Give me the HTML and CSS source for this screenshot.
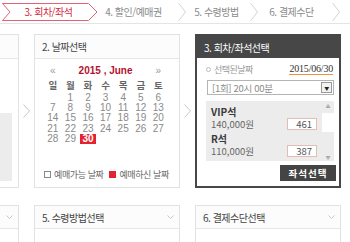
FILE: index.html
```html
<!DOCTYPE html>
<html lang="ko">
<head>
    <meta charset="UTF-8">
    <meta name="viewport" content="width=device-width, initial-scale=1.0">
    <title>예매 - 회차/좌석</title>
    <link rel="stylesheet" href="styles.css">
</head>
<body>
<div class="page">
    <!-- 단계 표시 -->
    <div class="steps">
        <svg class="step-lines" width="350" height="23" viewBox="0 0 350 23">
            <polygon points="2.5,3.5 88.5,3.5 97,12 88.5,20.5 2.5,20.5 10,12" fill="none" stroke="#e2627a" stroke-width="1"/>
            <polyline points="178.5,3 185.5,12 178.5,21" fill="none" stroke="#d4d4d4"/>
            <polyline points="250.5,3 257.5,12 250.5,21" fill="none" stroke="#d4d4d4"/>
            <polyline points="332.5,3 339.5,12 332.5,21" fill="none" stroke="#d4d4d4"/>
        </svg>
        <div class="step-labels">
            <span class="on" style="width:97px">3. 회차/좌석</span>
            <span style="width:73px">4. 할인/예매권</span>
            <span style="width:93px">5. 수령방법</span>
            <span style="width:57px">6. 결제수단</span>
        </div>
    </div>

    <div class="board">
        <!-- 1. 공연선택 (가려짐) -->
        <div class="card">
            <div class="card-head">1. 공연선택</div>
            <div class="card-body">
                <div class="show-list"></div>
            </div>
        </div>
        <div class="arrow"><svg width="7" height="14" viewBox="0 0 7 14"><polyline points="0.5,0.5 6.5,7 0.5,13.5" fill="none" stroke="#c8c8c8"/></svg></div>

        <!-- 2. 날짜선택 -->
        <div class="card">
            <div class="card-head">2. 날짜선택</div>
            <div class="card-body">
                <div class="cal">
                    <span class="cal-nav">«</span>
                    <span class="cal-title">2015 , June</span>
                    <span class="cal-nav">»</span>
                    <span class="wd">일</span><span class="wd">월</span><span class="wd">화</span><span class="wd">수</span><span class="wd">목</span><span class="wd">금</span><span class="wd">토</span>
                    <span></span><span>1</span><span>2</span><span>3</span><span>4</span><span>5</span><span>6</span>
                    <span>7</span><span>8</span><span>9</span><span>10</span><span>11</span><span>12</span><span>13</span>
                    <span>14</span><span>15</span><span>16</span><span>17</span><span>18</span><span>19</span><span>20</span>
                    <span>21</span><span>22</span><span>23</span><span>24</span><span>25</span><span>26</span><span>27</span>
                    <span>28</span><span>29</span><span><b class="picked">30</b></span>
                </div>
                <div class="legend">
                    <span class="mark mark-open"></span>예매가능 날짜
                    <span class="mark mark-booked"></span>예매하신 날짜
                </div>
            </div>
        </div>
        <div class="arrow"><svg width="7" height="14" viewBox="0 0 7 14"><polyline points="0.5,0.5 6.5,7 0.5,13.5" fill="none" stroke="#c8c8c8"/></svg></div>

        <!-- 3. 회차/좌석선택 -->
        <div class="card on">
            <div class="card-head">3. 회차/좌석선택</div>
            <div class="seat-body">
                <div class="date-row">
                    <span class="date-label">선택된날짜</span>
                    <span class="date-value">2015/06/30</span>
                </div>
                <div class="select">
                    <span>[1회] 20시 00분</span>
                    <span class="select-btn">▼</span>
                </div>
                <div class="seat-list">
                    <div class="seat-items">
                        <div class="seat">
                            <b>VIP석</b>
                            <div class="seat-price"><span>140,000원</span><span class="seat-count">461</span></div>
                        </div>
                        <div class="seat">
                            <b>R석</b>
                            <div class="seat-price"><span>110,000원</span><span class="seat-count">387</span></div>
                        </div>
                    </div>
                    <div class="scroll">
                        <span class="scroll-up">▲</span>
                        <span class="scroll-thumb"></span>
                        <span class="scroll-down">▼</span>
                    </div>
                </div>
                <button class="seat-btn">좌석선택</button>
            </div>
        </div>

        <!-- 아래 줄 -->
        <div class="card">
            <div class="card-head low">4. 할인/예매권선택<svg class="fold" width="7" height="4" viewBox="0 0 7 4"><polyline points="0.5,0.5 3.5,3.5 6.5,0.5" fill="none" stroke="#c8c8c8"/></svg></div>
        </div>
        <div></div>
        <div class="card">
            <div class="card-head low">5. 수령방법선택<svg class="fold" width="7" height="4" viewBox="0 0 7 4"><polyline points="0.5,0.5 3.5,3.5 6.5,0.5" fill="none" stroke="#c8c8c8"/></svg></div>
        </div>
        <div></div>
        <div class="card">
            <div class="card-head low">6. 결제수단선택<svg class="fold" width="7" height="4" viewBox="0 0 7 4"><polyline points="0.5,0.5 3.5,3.5 6.5,0.5" fill="none" stroke="#c8c8c8"/></svg></div>
        </div>
    </div>
</div>
</body>
</html>
```

FILE: styles.css
```css
* {
    box-sizing: border-box;
}
body {
    margin: 0;
    background: #fff;
    font-family: "Noto Sans CJK KR", "Liberation Sans", sans-serif;
    color: #444;
}
.page {
    width: 350px;
    height: 242px;
    overflow: hidden;
}
/* 단계 탭 */
.steps {
    display: grid;
    height: 24px;
    border-bottom: 1px solid #e4e4e4;
}
.steps > * {
    grid-area: 1 / 1;
}
.step-lines {
    display: block;
}
.step-labels {
    display: flex;
    align-items: center;
    height: 23px;
    font-size: 10px;
    letter-spacing: -0.5px;
    color: #8a8a8a;
}
.step-labels span {
    text-align: center;
    white-space: nowrap;
}
.step-labels .on {
    color: #d8243c;
}
/* 카드 */
.board {
    display: grid;
    grid-template-columns: 146px 15px 146px 15px 146px;
    grid-template-rows: 154px 60px;
    row-gap: 17px;
    margin: 10px 0 0 -127px;
}
.card {
    border: 1px solid #e2e2e2;
    background: #fff;
    display: flex;
    flex-direction: column;
}
.card-head {
    height: 24px;
    flex: none;
    display: flex;
    align-items: center;
    padding-left: 7px;
    border-bottom: 1px solid #e6e6e6;
    background: #fcfcfc;
    font-size: 10px;
    letter-spacing: -0.5px;
    color: #444;
}
.card-head.low {
    height: 23px;
}
.card-head .fold {
    margin-left: auto;
    margin-right: 5px;
}
.card-body {
    flex: 1;
    display: flex;
    flex-direction: column;
}
.arrow {
    align-self: center;
    justify-self: center;
    line-height: 0;
}
.show-list {
    margin: 54px 6px 0 0;
    height: 68px;
    background: #ececec;
}
/* 달력 */
.cal {
    display: grid;
    grid-template-columns: repeat(7, 17.6px);
    grid-auto-rows: 10.2px;
    margin: 6px 0 0 9px;
    font-family: "Liberation Sans", sans-serif;
    font-size: 10px;
    color: #8a8a8a;
    text-align: center;
    line-height: 10px;
}
.cal-nav {
    height: 12px;
    line-height: 12px;
    color: #999;
    font-size: 10px;
}
.cal-title {
    grid-column: span 5;
    height: 12px;
    line-height: 12px;
    font-weight: bold;
    color: #b3122e;
}
.cal .wd {
    margin-top: 1px;
    height: 14px;
    line-height: 14px;
    font-family: "Noto Sans CJK KR", sans-serif;
    font-weight: bold;
    font-size: 9.5px;
    color: #666;
}
.cal-nav, .cal-title {
    grid-row: 1;
}
.cal {
    grid-template-rows: 12px 16px;
}
.picked {
    display: inline-block;
    padding: 0 2px;
    line-height: 10px;
    background: #e3232f;
    color: #fff;
}
.legend {
    margin-top: auto;
    margin-bottom: 7px;
    padding-left: 9px;
    display: flex;
    align-items: center;
    height: 12px;
    font-size: 9px;
    letter-spacing: -0.4px;
    color: #666;
}
.mark {
    width: 7px;
    height: 7px;
    margin-right: 3px;
}
.mark-open {
    border: 1px solid #888;
}
.mark-booked {
    margin-left: 6px;
    background: #e3232f;
}
/* 회차/좌석 */
.card.on {
    border: 2px solid #474747;
}
.card.on .card-head {
    height: 22px;
    border-bottom: none;
    background: #474747;
    color: #fff;
}
.seat-body {
    flex: 1;
    display: flex;
    flex-direction: column;
    padding: 4px 5px 0 9px;
}
.date-row {
    display: flex;
    justify-content: space-between;
    align-items: center;
    height: 14px;
}
.date-label {
    font-size: 9px;
    letter-spacing: -0.5px;
    color: #999;
    display: flex;
    align-items: center;
}
.date-label::before {
    content: "";
    width: 3px;
    height: 3px;
    border: 1px solid #bbb;
    border-radius: 50%;
    margin-right: 3px;
}
.date-value {
    font-family: "Liberation Serif", serif;
    font-size: 10px;
    letter-spacing: -0.2px;
    line-height: 11px;
    color: #333;
    border-bottom: 1px solid #e8953a;
    margin-right: 1px;
}
.select {
    margin: 4px 0 0 1px;
    height: 15px;
    border: 1px solid #b4b4b4;
    display: flex;
    align-items: center;
    justify-content: space-between;
    padding: 0 1px 0 4px;
    font-size: 9.5px;
    letter-spacing: -0.3px;
    color: #8a8a8a;
}
.select-btn {
    width: 11px;
    height: 11px;
    border: 1px solid #9a9a9a;
    background: #f2f2f2;
    color: #222;
    font-size: 5px;
    line-height: 9px;
    text-align: center;
}
.seat-list {
    margin-top: 6px;
    height: 60px;
    display: flex;
    background: #ececec;
}
.seat-items {
    flex: 1;
    padding: 5px 5px 0 5px;
}
.seat + .seat {
    margin-top: 3px;
}
.seat b {
    display: block;
    height: 11px;
    line-height: 11px;
    font-size: 10px;
    color: #3a3a3a;
}
.seat-price {
    display: flex;
    justify-content: space-between;
    align-items: center;
    height: 13px;
    font-size: 9.5px;
    color: #666;
}
.seat-count {
    width: 30px;
    height: 12px;
    border: 1px solid #e2bdb4;
    background: #fff;
    text-align: right;
    padding-right: 4px;
    line-height: 10px;
    font-size: 9.5px;
    color: #555;
}
.scroll {
    width: 12px;
    display: flex;
    flex-direction: column;
    align-items: center;
    font-size: 5px;
    color: #aaa;
}
.scroll-up {
    height: 12px;
    line-height: 10px;
}
.scroll-thumb {
    width: 12px;
    height: 19px;
    background: #fff;
}
.scroll-down {
    margin-top: auto;
    height: 9px;
    line-height: 9px;
}
.seat-btn {
    align-self: flex-end;
    margin: 4px -2px 0 0;
    width: 56px;
    height: 16px;
    padding: 0;
    border: none;
    background: #444;
    color: #fff;
    font-family: "Noto Sans CJK KR", sans-serif;
    font-size: 9.5px;
    font-weight: bold;
    letter-spacing: 1px;
}
```
